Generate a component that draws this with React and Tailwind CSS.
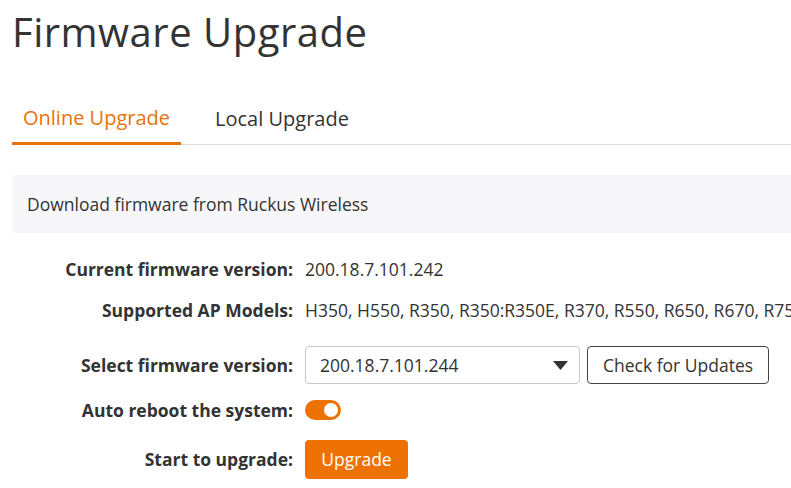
import React, { useState } from 'react';

// Firmware upgrade page
export default function App() {
    const [autoReboot, setAutoReboot] = useState(true);
    const [version, setVersion] = useState('200.18.7.101.244');

    const labelCls = 'w-[281px] shrink-0 text-right font-bold text-[17.5px] text-[#333] mr-3';

    return (
        <main className="w-[791px] h-[488px] overflow-hidden bg-white text-[#333]" style={{ fontFamily: '"Open Sans", "Noto Sans", sans-serif' }}>
            <div className="pl-3">
                {/* Title */}
                <h1 className="pt-[6px] text-[40px] leading-[52px] font-normal text-[#333] tracking-[0.5px]">
                    Firmware Upgrade
                </h1>

                {/* Tabs */}
                <nav className="mt-[47px] flex border-b border-[#d9d9d9]">
                    <button className="px-[11px] pb-[11px] text-[20px] leading-[26px] text-[#e8720c] border-b-[3px] border-[#e8720c] -mb-px">
                        Online Upgrade
                    </button>
                    <button className="ml-[23px] px-[11px] pb-[11px] text-[20px] leading-[26px] text-[#333]">
                        Local Upgrade
                    </button>
                </nav>

                {/* Info box */}
                <section className="mt-[30px] h-[58px] bg-[#f7f7f9] rounded-l-[4px] flex items-center pl-[15px] text-[17.5px]">
                    Download firmware from Ruckus Wireless
                </section>

                {/* Form */}
                <form className="flex flex-col text-[17.5px]" onSubmit={(e) => e.preventDefault()}>
                    <div className="mt-[24px] h-[24px] flex items-center whitespace-nowrap">
                        <span className={labelCls}>Current firmware version:</span>
                        <span>200.18.7.101.242</span>
                    </div>
                    <div className="mt-[17px] h-[24px] flex items-center whitespace-nowrap">
                        <span className={labelCls}>Supported AP Models:</span>
                        <span>H350, H550, R350, R350:R350E, R370, R550, R650, R670, R750</span>
                    </div>
                    <div className="mt-[24px] h-[38px] flex items-center whitespace-nowrap">
                        <span className={labelCls}>Select firmware version:</span>
                        <div className="relative w-[275px] h-[38px]">
                            <select
                                value={version}
                                onChange={(e) => setVersion(e.target.value)}
                                className="appearance-none w-full h-full border border-[#c8c8c8] rounded-[4px] bg-white pl-[14px] text-[17.5px] text-[#333] outline-none"
                            >
                                <option>200.18.7.101.244</option>
                                <option>200.18.7.101.242</option>
                            </select>
                            <svg className="absolute right-[12px] top-[15px] pointer-events-none" width="15" height="9" viewBox="0 0 15 9">
                                <path d="M0 0 L15 0 L7.5 9 Z" fill="#333" />
                            </svg>
                        </div>
                        <button type="button" className="ml-[7px] h-[38px] w-[182px] border border-[#444] rounded-[4px] bg-white text-[17.5px] text-[#333]">
                            Check for Updates
                        </button>
                    </div>
                    <div className="mt-[16px] h-[20px] flex items-center whitespace-nowrap">
                        <span className={labelCls}>Auto reboot the system:</span>
                        <button
                            type="button"
                            onClick={() => setAutoReboot(!autoReboot)}
                            className={autoReboot
                                ? 'w-[36px] h-[20px] rounded-full bg-[#ee7203] flex items-center justify-end pr-[3px]'
                                : 'w-[36px] h-[20px] rounded-full bg-[#ccc] flex items-center justify-start pl-[3px]'}
                        >
                            <span className="block w-[14px] h-[14px] rounded-full bg-white" />
                        </button>
                    </div>
                    <div className="mt-[20px] h-[39px] flex items-center whitespace-nowrap">
                        <span className={labelCls}>Start to upgrade:</span>
                        <button type="submit" className="h-[39px] w-[103px] rounded-[4px] bg-[#ee7203] text-white text-[17.5px]">
                            Upgrade
                        </button>
                    </div>
                </form>
            </div>
        </main>
    );
}
